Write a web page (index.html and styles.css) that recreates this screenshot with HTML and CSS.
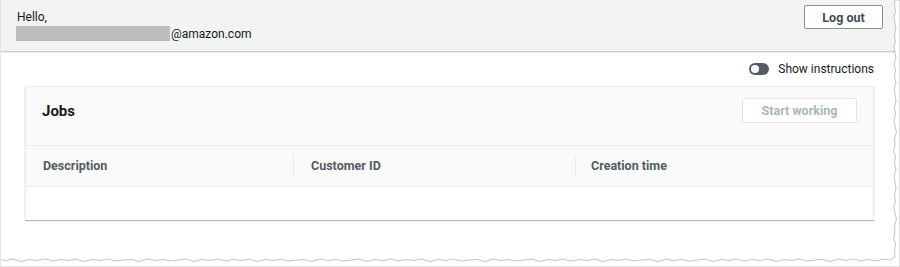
FILE: index.html
```html
<!DOCTYPE html>
<html>
<head>
<meta charset="utf-8">
<link rel="stylesheet" href="styles.css">
</head>
<body>
<div class="page">
  <header class="topbar">
    <div class="greeting">
      <div class="line">Hello,</div>
      <div class="line"><span class="redact"></span>@amazon.com</div>
    </div>
    <button class="btn logout">Log out</button>
  </header>
  <main class="main">
    <div class="toggle-row">
      <span class="toggle"><span class="knob"></span></span>
      <span class="toggle-label">Show instructions</span>
    </div>
    <section class="card">
      <div class="card-head">
        <h2 class="card-title">Jobs</h2>
        <button class="btn start" disabled>Start working</button>
      </div>
      <div class="thead">
        <div class="th th1">Description</div>
        <div class="th th2"><span class="sep"></span>Customer ID</div>
        <div class="th th3"><span class="sep"></span>Creation time</div>
      </div>
      <div class="tbody"></div>
    </section>
  </main>
  <svg class="torn" width="900" height="267" viewBox="0 0 900 267" xmlns="http://www.w3.org/2000/svg">
    <path d="M900 0 L895 0 L894.5 6 L895.5 11 L894 17 L895 23 L896 28 L894.5 35 L895.5 41 L894 46 L895 53 L896 58 L894 64 L895.5 70 L894.5 77 L896 83 L894 89 L895 95 L896 101 L894.5 108 L895.5 114 L894 120 L895 126 L896.5 132 L894.5 139 L895 145 L893.5 151 L895.5 157 L894.5 163 L896 170 L894 176 L895 182 L896 188 L894.5 195 L895.5 201 L894 207 L895 213 L896.5 219 L894.5 226 L895 232 L893.5 238 L895.5 244 L894.5 250 L895 257 L890 260 L883 259 L876 261 L868 259.5 L861 261 L853 259 L846 260.5 L838 259 L830 261.5 L822 259.5 L815 260 L807 261 L799 259 L791 260.5 L784 259.5 L776 261.5 L768 259 L760 260.5 L752 259.5 L744 261 L736 259 L729 260.5 L721 259.5 L713 261.5 L705 259 L697 260 L689 261 L681 259.5 L673 260.5 L666 259 L658 261.5 L650 259.5 L642 260 L634 261 L626 259 L618 260.5 L611 259.5 L603 261.5 L595 259 L587 260.5 L579 259.5 L571 261 L563 259 L556 260.5 L548 259.5 L540 261.5 L532 259 L524 260 L516 261 L508 259.5 L501 260.5 L493 259 L485 261.5 L477 259.5 L469 260 L461 261 L453 259 L446 260.5 L438 259.5 L430 261.5 L422 259 L414 260.5 L406 259.5 L398 261 L391 259 L383 260.5 L375 259.5 L367 261.5 L359 259 L351 260 L343 261 L336 259.5 L328 260.5 L320 259 L312 261.5 L304 259.5 L296 260 L288 261 L281 259 L273 260.5 L265 259.5 L257 261.5 L249 259 L241 260.5 L233 259.5 L226 261 L218 259 L210 260.5 L202 259.5 L194 261.5 L186 259 L178 260 L171 261 L163 259.5 L155 260.5 L147 259 L139 261.5 L131 259.5 L123 260 L116 261 L108 259 L100 260.5 L92 259.5 L84 261.5 L76 259 L68 260.5 L61 259.5 L53 261 L45 259 L37 260.5 L29 259.5 L21 261.5 L13 259 L6 260.5 L0 259.5 L0 267 L900 267 Z" fill="#ffffff" stroke="#c4c4c4" stroke-width="1"/>
  </svg>
</div>
</body>
</html>
```
FILE: styles.css
```css
* { box-sizing: border-box; }
html, body { margin: 0; padding: 0; background: #ffffff; }
body { font-family: Roboto, "Liberation Sans", Arial, sans-serif; color: #16191f; font-size: 12px; }
.page { position: relative; width: 900px; height: 267px; overflow: hidden; border-left: 1px solid #e6e6e6; }
.topbar {
  height: 52px;
  background: #f2f3f3;
  border-bottom: 1px solid #c9cccc;
  box-shadow: 0 1px 1px rgba(0,0,0,0.06);
  display: flex;
  justify-content: space-between;
  align-items: flex-start;
  padding: 9px 17px 0 15px;
}
.greeting .line { line-height: 16.5px; font-size: 12px; color: #16191f; }
.greeting .line:first-child { padding-left: 1px; }
.redact { display: inline-block; width: 154px; height: 15px; background: #bdbdbd; vertical-align: -3px; margin-right: 1px; }
.btn {
  font-family: Roboto, "Liberation Sans", Arial, sans-serif;
  font-weight: 700;
  font-size: 12.5px;
  border-radius: 2px;
  background: #ffffff;
  cursor: pointer;
}
.logout {
  margin-top: -4px;
  width: 79px;
  height: 24px;
  border: 1px solid #8c8f91;
  color: #444b53;
  padding: 0;
}
.main { padding: 9px 26px 0 24px; }
.toggle-row { display: flex; justify-content: flex-end; align-items: center; height: 16px; gap: 9px; }
.toggle { width: 20px; height: 12px; border-radius: 6px; background: #545b64; position: relative; display: inline-block; }
.knob { position: absolute; left: 2px; top: 2px; width: 8px; height: 8px; border-radius: 50%; background: #ffffff; }
.toggle-label { font-size: 12px; color: #16191f; }
.card {
  margin-top: 9px;
  border: 1px solid #eaeded;
  border-bottom: none;
  box-shadow: 0 1px 1px 0 rgba(0,28,36,0.3);
  background: #ffffff;
}
.card-head {
  height: 58px;
  background: #fafafa;
  display: flex;
  justify-content: space-between;
  align-items: flex-start;
  padding: 11px 16px 0 16px;
}
.card-title { margin: 4px 0 0 0; line-height: 18px; font-size: 15px; font-weight: 700; color: #16191f; }
.start {
  width: 115px;
  height: 25px;
  border: 1px solid #e4e7e7;
  color: #aab7b8;
  padding: 0;
}
.thead {
  display: grid;
  grid-template-columns: 267px 282px 1fr;
  height: 42px;
  background: #fafafa;
  border-top: 1px solid #eaeded;
  border-bottom: 1px solid #eaeded;
}
.th {
  position: relative;
  display: flex;
  align-items: center;
  font-weight: 700;
  font-size: 12.5px;
  color: #545b64;
  padding-left: 17px;
  padding-bottom: 2px;
}
.th2 { padding-left: 18px; }
.th3 { padding-left: 16px; }
.sep { position: absolute; left: 0; top: 9px; bottom: 10px; width: 1px; background: #eaeded; }
.tbody { height: 33px; background: #ffffff; }
.torn { position: absolute; left: -1px; top: 0; pointer-events: none; }
```
